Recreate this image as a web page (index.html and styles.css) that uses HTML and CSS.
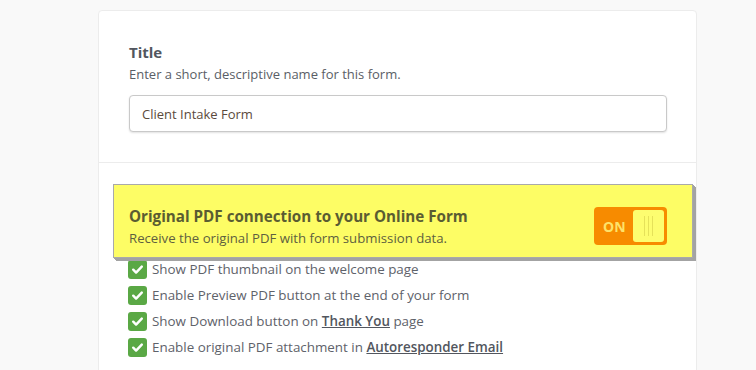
FILE: index.html
```html
<!DOCTYPE html>
<html lang="en">

<head>
    <meta charset="UTF-8">
    <meta name="viewport" content="width=device-width, initial-scale=1.0">
    <title>PDF Form Settings</title>
    <link rel="stylesheet" href="styles.css">
</head>

<body>
    <div class="card">
        <div class="section">
            <h3>Title</h3>
            <p class="hint">Enter a short, descriptive name for this form.</p>
            <input type="text" class="text-input" value="Client Intake Form">
        </div>

        <div class="section section-pdf">
            <div class="highlight">
                <div class="highlight-text">
                    <h3>Original PDF connection to your Online Form</h3>
                    <p>Receive the original PDF with form submission data.</p>
                </div>
                <div class="toggle">
                    <span class="toggle-label">ON</span>
                    <span class="toggle-knob"><i></i><i></i><i></i></span>
                </div>
            </div>

            <ul class="checklist">
                <li><span class="check"><svg viewBox="0 0 20 20"><path d="M5.5 10.2l3 3 6-6.2" /></svg></span>Show PDF thumbnail on the welcome page</li>
                <li><span class="check"><svg viewBox="0 0 20 20"><path d="M5.5 10.2l3 3 6-6.2" /></svg></span>Enable Preview PDF button at the end of your form</li>
                <li><span class="check"><svg viewBox="0 0 20 20"><path d="M5.5 10.2l3 3 6-6.2" /></svg></span>Show Download button on&nbsp;<a href="#">Thank You</a>&nbsp;page</li>
                <li><span class="check"><svg viewBox="0 0 20 20"><path d="M5.5 10.2l3 3 6-6.2" /></svg></span>Enable original PDF attachment in&nbsp;<a href="#">Autoresponder Email</a></li>
            </ul>
        </div>
    </div>
</body>

</html>
```

FILE: styles.css
```css
* {
    margin: 0;
    padding: 0;
    box-sizing: border-box;
    font-family: "Open Sans", Arial, sans-serif;
}

body {
    background: #f9f9f9;
    height: 100vh;
    overflow: hidden;
}

.card {
    margin: 10px 0 0 98px;
    width: 599px;
    background: white;
    border: 1px solid #ececec;
    border-radius: 4px;
    color: #5a5e66;
}

.section {
    padding: 31px 30px 30px 30px;
}

.section + .section {
    border-top: 1px solid #ececec;
    padding: 21px 30px 14px 14px;
}

h3 {
    font-size: 15px;
    font-weight: bold;
    color: #52565e;
    line-height: 20px;
}

.hint {
    font-size: 13px;
    line-height: 18px;
    margin-top: 3px;
}

.text-input {
    display: block;
    width: 538px;
    height: 37px;
    margin-top: 12px;
    padding: 0 12px;
    border: 1px solid #c9c9c9;
    border-radius: 4px;
    box-shadow: 0 1px 2px rgba(0, 0, 0, 0.12);
    font-size: 13px;
    color: #5b4a3c;
    outline: none;
}

.highlight {
    position: relative;
    z-index: 1;
    display: flex;
    align-items: center;
    justify-content: space-between;
    width: 580px;
    height: 74px;
    padding: 10px 25px 0 15px;
    margin-bottom: -2px;
    background: #fdfd65;
    border: 1px solid #a9a9a9;
    box-shadow: 1px 1px 0 #a3a3a3, 2px 2px 0 #a3a3a3, 3px 3px 0 #a3a3a3;
}

.highlight h3 {
    font-size: 15.2px;
    color: #5a5c32;
}

.highlight p {
    font-size: 13.2px;
    line-height: 18px;
    margin-top: 3px;
    color: #5e6040;
}

.toggle {
    display: flex;
    align-items: center;
    width: 73px;
    height: 38px;
    padding: 3px 3px 3px 9px;
    background: #f78b00;
    border-radius: 4px;
}

.toggle-label {
    flex: 1;
    font-size: 14px;
    font-weight: bold;
    color: #fde26a;
}

.toggle-knob {
    display: flex;
    justify-content: center;
    gap: 3px;
    width: 31px;
    height: 32px;
    background: #fdfd70;
    border-radius: 3px;
    padding: 6px 0;
}

.toggle-knob i {
    width: 1px;
    background: #e5e15a;
}

.checklist {
    list-style: none;
    padding-left: 15px;
}

.checklist li {
    display: flex;
    align-items: center;
    height: 26px;
    font-size: 13.4px;
    color: #5e626a;
}

.check {
    width: 19px;
    height: 19px;
    margin-right: 5px;
    background: #5aa845;
    border-radius: 3px;
}

.check svg {
    display: block;
    width: 19px;
    height: 19px;
    fill: none;
    stroke: white;
    stroke-width: 2.6;
    stroke-linecap: round;
    stroke-linejoin: round;
}

.checklist a {
    color: #52565e;
    font-weight: 600;
    text-decoration: underline;
}
```
